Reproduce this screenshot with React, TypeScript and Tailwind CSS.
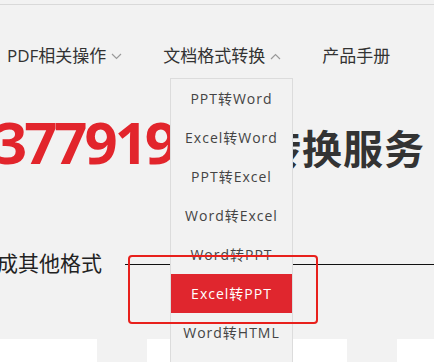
import React from 'react';

const menuItems = ['PPT转Word', 'Excel转Word', 'PPT转Excel', 'Word转Excel', 'Word转PPT', 'Excel转PPT', 'Word转HTML'];

function Chevron({ up }: { up?: boolean }) {
  return (
    <svg width="11" height="7" viewBox="0 0 11 7" fill="none" stroke="#9a9a9a" strokeWidth="1.2" className="ml-[5px]">
      {up ? <polyline points="1 6 5.5 1.5 10 6" /> : <polyline points="1 1 5.5 5.5 10 1" />}
    </svg>
  );
}

export default function App() {
  return (
    <div className="relative w-[434px] h-[362px] overflow-hidden bg-[#f2f2f2] font-['Open_Sans','Noto_Sans_CJK_SC',sans-serif]">
      {/* top rule */}
      <div className="h-[5px] border-b border-[#d9d9d9]" />

      {/* nav */}
      <nav className="flex items-center h-[26px] mt-[38px] pl-[7px] gap-[41px] text-[17px] text-[#333] whitespace-nowrap">
        <div className="flex items-center">
          PDF相关操作
          <Chevron />
        </div>
        <div className="flex items-center">
          文档格式转换
          <Chevron up />
        </div>
        <div>产品手册</div>
      </nav>

      {/* headline */}
      <div className="flex items-baseline whitespace-nowrap ml-[-6px] mt-[44px] h-[60px] font-bold leading-none">
        <span className="text-[58px] tracking-[-3px] text-[#e2252c]">377919</span>
        <span className="text-[40px] tracking-[1px] text-[#333] ml-[4px]">文档转换服务</span>
      </div>

      {/* subtitle with rule */}
      <div className="flex items-center mt-[76px] h-[30px] ml-[-3px] whitespace-nowrap">
        <span className="text-[21px] text-[#222]">成其他格式</span>
        <div className="flex-1 h-px bg-[#111] ml-[23px]" />
      </div>

      {/* cards */}
      <div className="flex gap-[50px] mt-[60px] ml-[-103px]">
        <div className="w-[200px] h-[60px] bg-white shrink-0" />
        <div className="w-[200px] h-[60px] bg-white shrink-0" />
        <div className="w-[200px] h-[60px] bg-white shrink-0" />
      </div>

      {/* dropdown menu */}
      <div className="absolute left-[170px] top-[78px] w-[123px] h-[300px] bg-[#f2f2f2] border-x border-t border-[#dcdcdc]">
        {menuItems.map((item) => (
          <div
            key={item}
            className={`h-[39px] leading-[39px] text-center text-[14px] tracking-[1px] ${
              item === 'Excel转PPT' ? 'bg-[#e0262e] text-white' : 'text-[#444]'
            }`}
          >
            {item}
          </div>
        ))}
      </div>

      {/* annotation */}
      <div className="absolute left-[128px] top-[255px] w-[190px] h-[69px] border-2 border-[#e8201c] rounded-[4px]" />
    </div>
  );
}
